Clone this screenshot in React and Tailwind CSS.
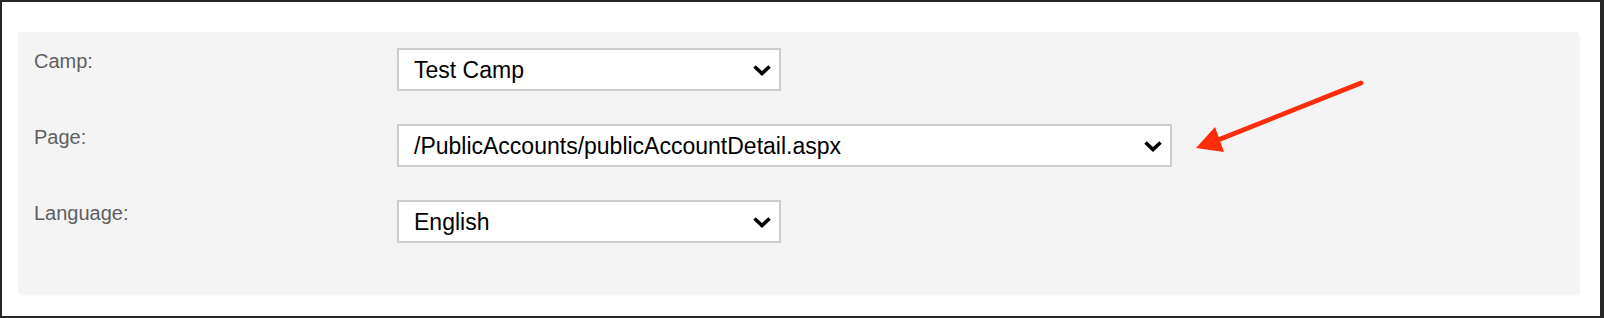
import React from 'react';

const FIELDS = [
  { label: 'Camp:', value: 'Test Camp', width: 'w-[384px]' },
  { label: 'Page:', value: '/PublicAccounts/publicAccountDetail.aspx', width: 'w-[775px]' },
  { label: 'Language:', value: 'English', width: 'w-[384px]' },
];

function Chevron() {
  return (
    <svg width="20" height="12" viewBox="0 0 20 12" className="shrink-0">
      <polyline points="2.5,2.5 10,9.5 17.5,2.5" fill="none" stroke="#000" strokeWidth="3.6" strokeLinejoin="miter" />
    </svg>
  );
}

function FakeSelect({ value, width }) {
  return (
    <div className={`${width} h-[43px] flex items-center justify-between bg-white border-2 border-[#cdcdcd] pl-[15px] pr-[7px]`}>
      <span className="text-[23px] text-black leading-none pt-px">{value}</span>
      <Chevron />
    </div>
  );
}

export default function App() {
  return (
    <div
      className="relative w-[1604px] h-[318px] bg-white border-t-2 border-l-2 border-b-2 border-r-4 border-[#262626] pt-[30px] pl-4 pr-[22px]"
      style={{ fontFamily: '"Liberation Sans", Arial, sans-serif' }}
    >
      <div className="bg-[#f4f4f4] shadow-[2px_2px_2px_rgba(0,0,0,0.05)] pl-[16px] pt-4 pb-[50px] flex flex-col gap-[33px]">
        {FIELDS.map((f) => (
          <div key={f.label} className="flex items-start">
            <label className="w-[363px] text-[20px] text-[#5f5f5f] leading-[24px] pt-px">{f.label}</label>
            <FakeSelect value={f.value} width={f.width} />
          </div>
        ))}
      </div>

      {/* annotation arrow */}
      <svg className="absolute left-0 top-0 pointer-events-none" width="1604" height="318" viewBox="-2 -2 1604 318">
        <line x1="1357" y1="79" x2="1214" y2="136" stroke="#fd2c0b" strokeWidth="4.8" strokeLinecap="round" />
        <polygon points="1192,144 1211,123 1220,148" fill="#fd2c0b" />
      </svg>
    </div>
  );
}
